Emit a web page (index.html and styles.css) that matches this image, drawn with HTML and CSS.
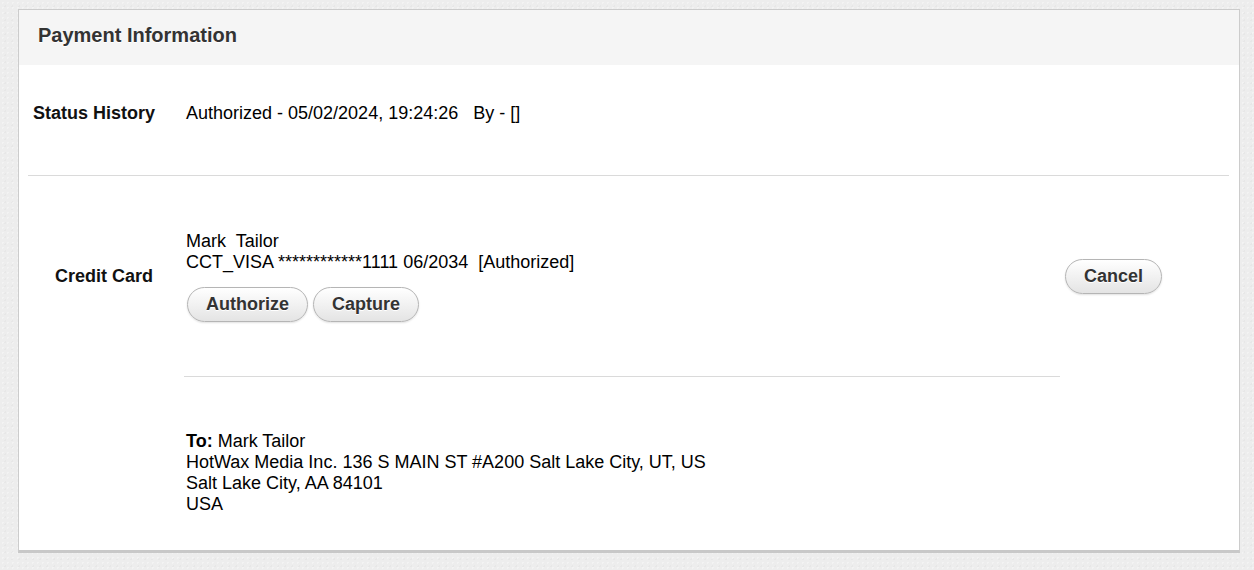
FILE: index.html
```html
<!DOCTYPE html>
<html>
<head>
<meta charset="utf-8">
<link rel="stylesheet" href="styles.css">
</head>
<body>
<div class="panel">
  <div class="panel-header">
    <h3 class="panel-title">Payment Information</h3>
  </div>
  <div class="panel-body">
    <div class="row row-status">
      <div class="label label-status">Status History</div>
      <div class="value">Authorized - 05/02/2024, 19:24:26&nbsp;&nbsp; By - []</div>
    </div>
    <hr class="sep">
    <div class="row row-card">
      <div class="label label-card">Credit Card</div>
      <div class="value">
        <div class="line">Mark&nbsp; Tailor</div>
        <div class="line">CCT_VISA ************1111 06/2034&nbsp; [Authorized]</div>
        <div class="btns">
          <button class="btn">Authorize</button>
          <button class="btn">Capture</button>
        </div>
      </div>
      <div class="action">
        <button class="btn">Cancel</button>
      </div>
    </div>
    <div class="row row-addr">
      <div class="label"></div>
      <div class="value">
        <hr class="inner-sep">
        <div class="address">
          <div class="line"><b>To:</b> Mark Tailor</div>
          <div class="line">HotWax Media Inc. 136 S MAIN ST #A200 Salt Lake City, UT, US</div>
          <div class="line">Salt Lake City, AA 84101</div>
          <div class="line">USA</div>
        </div>
      </div>
    </div>
  </div>
</div>
</body>
</html>
```
FILE: styles.css
```css
html, body {
  margin: 0;
  padding: 0;
}
body {
  background-color: #ededed;
  background-image:
    radial-gradient(rgba(255,255,255,0.35) 1px, transparent 1px),
    radial-gradient(rgba(0,0,0,0.025) 1px, transparent 1px);
  background-size: 5px 5px, 7px 7px;
  background-position: 0 0, 2px 3px;
  font-family: "Liberation Sans", Arial, sans-serif;
  font-size: 18px;
  color: #000;
  padding-top: 9px;
  height: 570px;
  box-sizing: border-box;
}
.panel {
  margin: 0 14px 0 18px;
  background: #fff;
  border: 1px solid #cccccc;
  border-bottom: 3px solid #c8c8c8;
}
.panel-header {
  height: 55px;
  box-sizing: border-box;
  padding: 14px 0 0 19px;
  background: #f5f5f5;
}
.panel-title {
  margin: 0;
  font-size: 20px;
  font-weight: bold;
  color: #333;
  text-shadow: 0 1px 0 #fff;
  line-height: 23px;
}
.panel-body {
  padding: 0 10px 0 9px;
}
.row {
  display: flex;
}
.label {
  width: 128px;
  flex: 0 0 128px;
  box-sizing: border-box;
  text-align: right;
  font-weight: bold;
  color: #111;
}
.label-status {
  padding-right: 1px;
}
.label-card {
  padding-right: 3px;
}
.value {
  width: 874px;
  flex: 0 0 874px;
  margin-left: 30px;
}
.line {
  line-height: 21px;
}
.row-status {
  height: 110px;
  box-sizing: border-box;
  padding-top: 38px;
}
.row-status .label, .row-status .value {
  line-height: 21px;
}
.sep {
  margin: 0;
  border: 0;
  border-top: 1px solid #dadada;
  height: 0;
}
.row-card {
  height: 200px;
  align-items: center;
}
.btns {
  margin-top: 14px;
  display: flex;
  gap: 5px;
  margin-left: 1px;
}
.btn {
  font-family: "Liberation Sans", Arial, sans-serif;
  font-size: 18px;
  font-weight: bold;
  color: #333;
  text-shadow: 0 1px 0 #fff;
  height: 35px;
  padding: 0 18px;
  border: 1px solid #b5b5b5;
  border-radius: 18px;
  background: linear-gradient(#ffffff, #e4e4e4);
  box-shadow: 0 1px 2px rgba(0,0,0,0.12);
  cursor: pointer;
}
.action {
  flex: 1;
  padding-left: 5px;
  padding-top: 1px;
}
.inner-sep {
  margin: 0 0 0 -2px;
  border: 0;
  border-top: 1px solid #dadada;
  height: 0;
}
.address {
  padding-top: 54px;
  padding-bottom: 35px;
}
.address b {
  font-weight: bold;
}
```
